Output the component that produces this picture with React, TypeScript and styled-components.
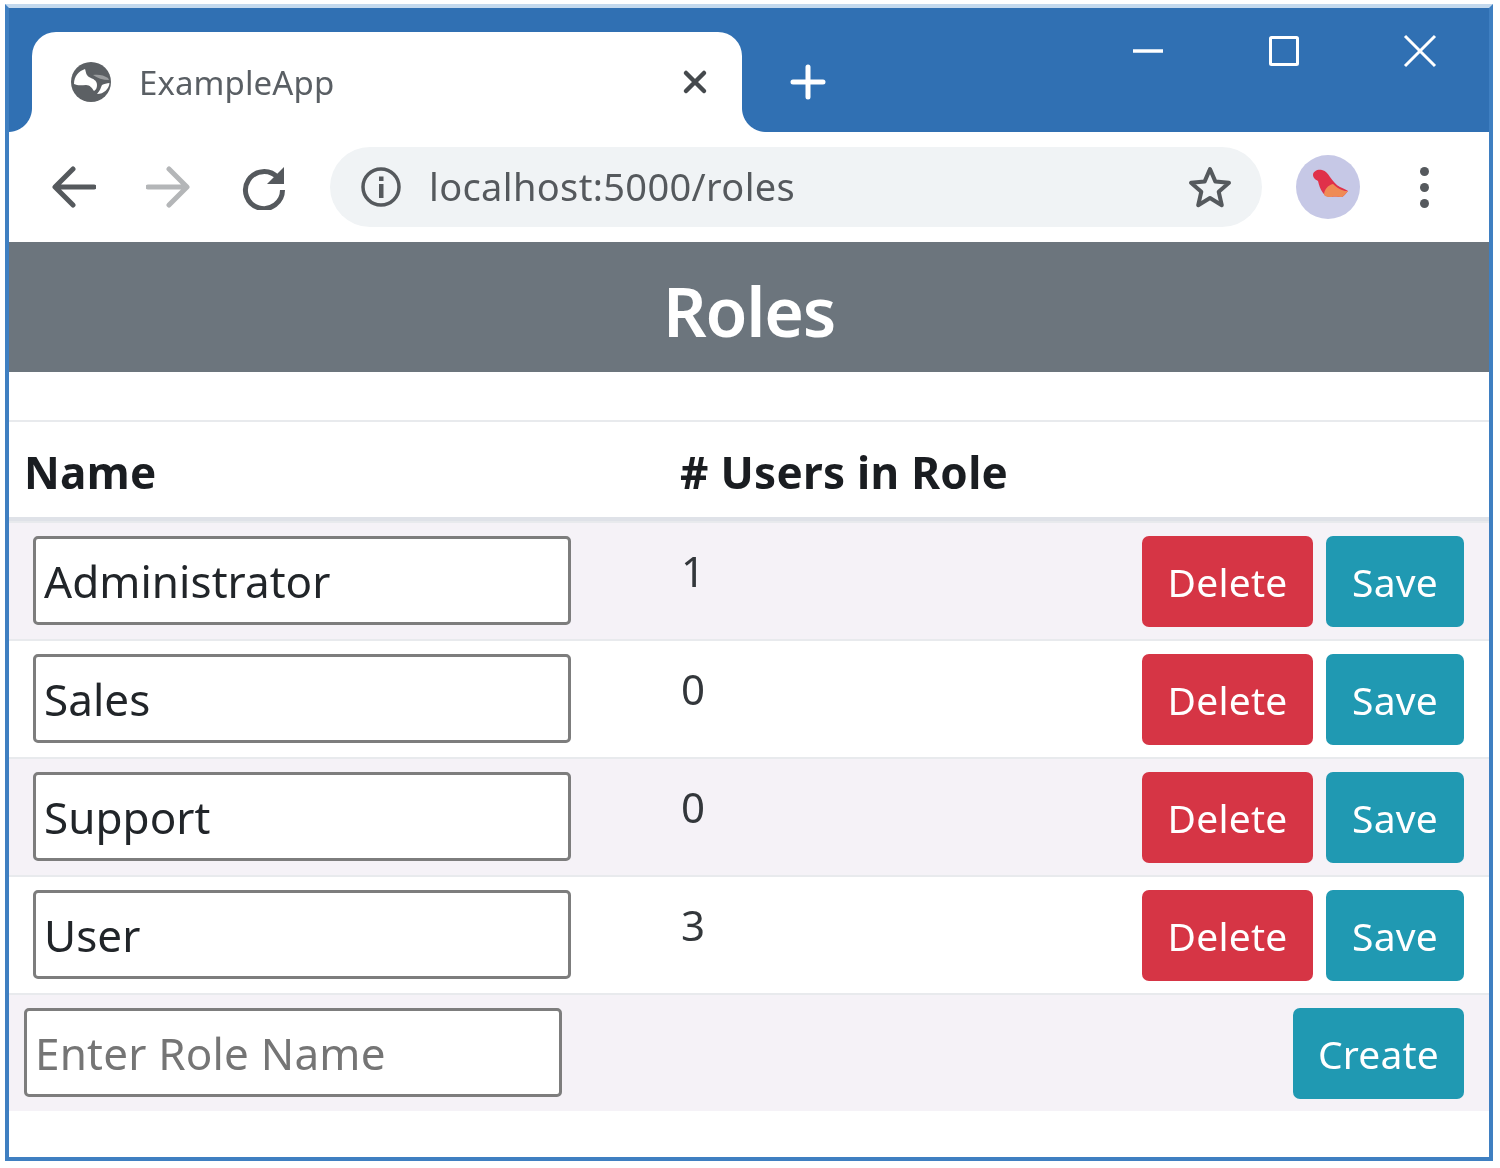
import styled, { createGlobalStyle } from 'styled-components';

const BLUE = '#3070b3';
const FONT = '"Noto Sans", "Open Sans", "Liberation Sans", sans-serif';

interface IRole {
  name: string;
  users: number;
}

const roles: IRole[] = [
  { name: 'Administrator', users: 1 },
  { name: 'Sales', users: 0 },
  { name: 'Support', users: 0 },
  { name: 'User', users: 3 },
];

const GlobalStyle = createGlobalStyle`
  html, body {
    margin: 0;
    padding: 0;
    background: #ffffff;
  }
  * {
    box-sizing: border-box;
  }
`;

// the reference is an upscaled screenshot, so everything is slightly soft
const Frame = styled.div`
  width: 1488px;
  height: 1157px;
  margin: 4px 0 0 5px;
  background: #ffffff;
  border: 4px solid #3f7fc1;
  border-top-color: #c3d9ee;
  overflow: hidden;
  font-family: ${FONT};
  filter: blur(0.7px);
`;

const TitleBar = styled.div`
  display: flex;
  height: 124px;
  padding: 24px 0 0 23px;
  background: ${BLUE};
`;

const Tab = styled.div`
  position: relative;
  display: flex;
  align-items: center;
  width: 710px;
  height: 100px;
  padding: 0 34px 0 37px;
  background: #ffffff;
  border-radius: 24px 24px 0 0;

  &::before,
  &::after {
    content: '';
    position: absolute;
    bottom: 0;
    width: 24px;
    height: 24px;
  }
  &::before {
    left: -24px;
    background: radial-gradient(circle at 0 0, ${BLUE} 23.5px, #ffffff 24.5px);
  }
  &::after {
    right: -24px;
    background: radial-gradient(circle at 100% 0, ${BLUE} 23.5px, #ffffff 24.5px);
  }
`;

const TabTitle = styled.span`
  flex: 1;
  margin-left: 26px;
  font-size: 33px;
  letter-spacing: 0.1px;
  color: #5a5f64;
`;

const NewTab = styled.div`
  display: flex;
  align-items: center;
  height: 100px;
  margin-left: 48px;
`;

const WindowControls = styled.div`
  display: flex;
  margin-left: auto;
  margin-right: 1px;
  margin-top: -24px;
`;

const WindowButton = styled.div`
  display: flex;
  align-items: center;
  justify-content: center;
  width: 136px;
  height: 85px;
`;

const Toolbar = styled.div`
  display: flex;
  align-items: center;
  height: 110px;
  padding: 0 0 0 42px;
`;

const NavButton = styled.div<{ $gap: number }>`
  display: flex;
  align-items: center;
  justify-content: center;
  width: 46px;
  height: 46px;
  margin-right: ${(props) => props.$gap}px;
`;

const Omnibox = styled.div`
  display: flex;
  align-items: center;
  width: 932px;
  height: 80px;
  padding: 0 30px 0 30px;
  border-radius: 40px;
  background: #f0f3f5;
`;

const Url = styled.span`
  flex: 1;
  margin-left: 27px;
  margin-top: -2px;
  font-size: 38px;
  letter-spacing: 0.35px;
  color: #55595d;
`;

const Avatar = styled.div`
  display: flex;
  align-items: center;
  justify-content: center;
  width: 64px;
  height: 64px;
  margin-left: 34px;
  border-radius: 50%;
  background: #c6c8e6;
`;

const MenuDots = styled.div`
  display: flex;
  flex-direction: column;
  gap: 7px;
  margin-left: 60px;
`;

const Dot = styled.span`
  width: 9px;
  height: 9px;
  border-radius: 50%;
  background: #55595d;
`;

const Banner = styled.h1`
  display: flex;
  align-items: center;
  justify-content: center;
  height: 130px;
  margin: 0 0 48px;
  padding-top: 6px;
  background: #6c757d;
  color: #ffffff;
  font-size: 68px;
  font-weight: 600;
  letter-spacing: -1.2px;
`;

const Row = styled.div<{ $striped?: boolean; $height: number }>`
  display: grid;
  grid-template-columns: 656px 1fr auto;
  height: ${(props) => props.$height}px;
  padding: 13px 25px 0 16px;
  background: ${(props) => (props.$striped ? '#f5f2f7' : '#ffffff')};
  border-top: 2px solid #e8eaed;
`;

const HeadRow = styled(Row)`
  padding-top: 20px;
  border-bottom: 4px solid #dfe2e8;
`;

const HeadCell = styled.div`
  font-size: 44px;
  font-weight: 700;
  line-height: 60px;
  letter-spacing: 0.3px;
  color: #1a1d21;
  margin-left: -1px;
`;

const NameInput = styled.input<{ $inset?: boolean }>`
  display: block;
  width: 538px;
  height: 89px;
  margin-left: ${(props) => (props.$inset ? '8px' : '-1px')};
  padding: 0 8px;
  border: 3px solid #7d7d7d;
  border-radius: 5px;
  background: #ffffff;
  font-family: ${FONT};
  font-size: 44px;
  letter-spacing: 0.05px;
  color: #212529;
  outline: none;

  &::placeholder {
    color: #757575;
    opacity: 1;
    letter-spacing: 0.2px;
  }
`;

const Count = styled.div`
  padding-top: 11px;
  font-size: 42px;
  line-height: 48px;
  color: #33373b;
`;

const Actions = styled.div`
  display: flex;
  justify-content: flex-end;
  align-items: flex-start;
  gap: 13px;
`;

const Button = styled.button<{ $danger?: boolean; $width: number }>`
  width: ${(props) => props.$width}px;
  height: 91px;
  padding: 0;
  border: none;
  border-radius: 7px;
  background: ${(props) => (props.$danger ? '#d63545' : '#2099b2')};
  font-family: ${FONT};
  font-size: 39px;
  letter-spacing: 0.2px;
  color: #ffffff;
`;

const Globe = () => (
  <svg width="44" height="44" viewBox="0 0 44 44">
    <circle cx="22" cy="22" r="20" fill="#5c6064" />
    <path d="M5 24C5 16 10 11 16 9c1 3 1 6 4 8 4 2 8 3 8 8 0 3-1 5-3 6-2-3-4-6-8-6s-8 1-12-1z" fill="#ffffff" />
    <path d="M28 34c3-3 4-7 5-9 2-1 5-2 7.500-2-.5 6-5.500 11-12.500 11z" fill="#ffffff" />
    <path d="M24 15c5-1 11 0 15 3l1 2c-6 0-12-2-16-5z" fill="#9a9c9e" />
  </svg>
);

const CloseTab = () => (
  <svg width="26" height="26" viewBox="0 0 26 26" stroke="#45494d" strokeWidth="4.5" strokeLinecap="round">
    <path d="M4 4l18 18M22 4L4 22" />
  </svg>
);

const Plus = () => (
  <svg width="36" height="36" viewBox="0 0 36 36" stroke="#ffffff" strokeWidth="5" strokeLinecap="round">
    <path d="M18 3v30M3 18h30" />
  </svg>
);

const Minimize = () => (
  <svg width="32" height="6" viewBox="0 0 32 6" stroke="#ffffff" strokeWidth="3.5">
    <path d="M1 3h30" />
  </svg>
);

const Maximize = () => (
  <svg width="32" height="32" viewBox="0 0 32 32" fill="none" stroke="#ffffff" strokeWidth="3">
    <rect x="2.5" y="2.5" width="27" height="27" rx="1" />
  </svg>
);

const CloseWindow = () => (
  <svg width="34" height="34" viewBox="0 0 34 34" stroke="#ffffff" strokeWidth="3">
    <path d="M2 2l30 30M32 2L2 32" />
  </svg>
);

const Arrow = ({ color, flip }: { color: string; flip?: boolean }) => (
  <svg
    width="44"
    height="44"
    viewBox="0 0 44 44"
    fill="none"
    stroke={color}
    strokeWidth="5"
    strokeLinecap="round"
    strokeLinejoin="round"
    transform={flip ? 'scale(-1 1)' : undefined}
  >
    <path d="M42 22H4M21 4L3 22l18 18" />
  </svg>
);

const Reload = () => (
  <svg width="46" height="46" viewBox="0 0 46 46" fill="none">
    <path d="M37 14A18.5 18.5 0 1 0 41.5 26" stroke="#55595d" strokeWidth="5" />
    <path d="M43 3v17H26z" fill="#55595d" />
  </svg>
);

const InfoIcon = () => (
  <svg width="42" height="42" viewBox="0 0 42 42" fill="none">
    <circle cx="21" cy="21" r="18" stroke="#55595d" strokeWidth="3.5" />
    <rect x="19" y="18" width="4.5" height="14" fill="#55595d" />
    <rect x="19" y="10.5" width="4.5" height="4.5" fill="#55595d" />
  </svg>
);

const StarIcon = () => (
  <svg width="44" height="44" viewBox="0 0 44 44" fill="none">
    <path
      d="M22 4l5.400 12.600 13.600 1.200-10.300 9 3.100 13.400L22 33l-11.800 7.200 3.100-13.400-10.300-9 13.600-1.200z"
      stroke="#55595d"
      strokeWidth="4"
      strokeLinejoin="round"
    />
  </svg>
);

const Bird = () => (
  <svg width="64" height="64" viewBox="0 0 64 64">
    <path d="M17 20c0-4 5-6 9-5 4 1 6 4 8 7 3 4 6 8 10 10 3 1 6 3 8 4-2 2-4 5-6 6-4 0-7-1-10 0-4 0-7-1-9-4-3-4-4-8-5-12-2-1-5-3-5-6z" fill="#e0314a" />
    <path d="M28 40c0-5 4-10 9-11 3 3 6 5 9 6 2 1 4 1 6 1-2 2-4 5-6 6-4 0-7-1-10 0-3 0-6 0-8-2z" fill="#ef8b55" />
  </svg>
);

const App = () => {
  return (
    <>
      <GlobalStyle />
      <Frame>
        <TitleBar>
          <Tab>
            <Globe />
            <TabTitle>ExampleApp</TabTitle>
            <CloseTab />
          </Tab>
          <NewTab>
            <Plus />
          </NewTab>
          <WindowControls>
            <WindowButton>
              <Minimize />
            </WindowButton>
            <WindowButton>
              <Maximize />
            </WindowButton>
            <WindowButton>
              <CloseWindow />
            </WindowButton>
          </WindowControls>
        </TitleBar>
        <Toolbar>
          <NavButton $gap={48}>
            <Arrow color="#55595d" />
          </NavButton>
          <NavButton $gap={50}>
            <Arrow color="#b4b6b8" flip />
          </NavButton>
          <NavButton $gap={43}>
            <Reload />
          </NavButton>
          <Omnibox>
            <InfoIcon />
            <Url>localhost:5000/roles</Url>
            <StarIcon />
          </Omnibox>
          <Avatar>
            <Bird />
          </Avatar>
          <MenuDots>
            <Dot />
            <Dot />
            <Dot />
          </MenuDots>
        </Toolbar>
        <Banner>Roles</Banner>
        <HeadRow $height={101}>
          <HeadCell>Name</HeadCell>
          <HeadCell># Users in Role</HeadCell>
        </HeadRow>
        {roles.map((role, index) => (
          <Row key={role.name} $striped={index % 2 === 0} $height={118}>
            <div>
              <NameInput $inset defaultValue={role.name} />
            </div>
            <Count>{role.users}</Count>
            <Actions>
              <Button $danger $width={171}>Delete</Button>
              <Button $width={138}>Save</Button>
            </Actions>
          </Row>
        ))}
        <Row $striped $height={118}>
          <div>
            <NameInput placeholder="Enter Role Name" />
          </div>
          <div />
          <Actions>
            <Button $width={171}>Create</Button>
          </Actions>
        </Row>
      </Frame>
    </>
  );
};

export default App;
